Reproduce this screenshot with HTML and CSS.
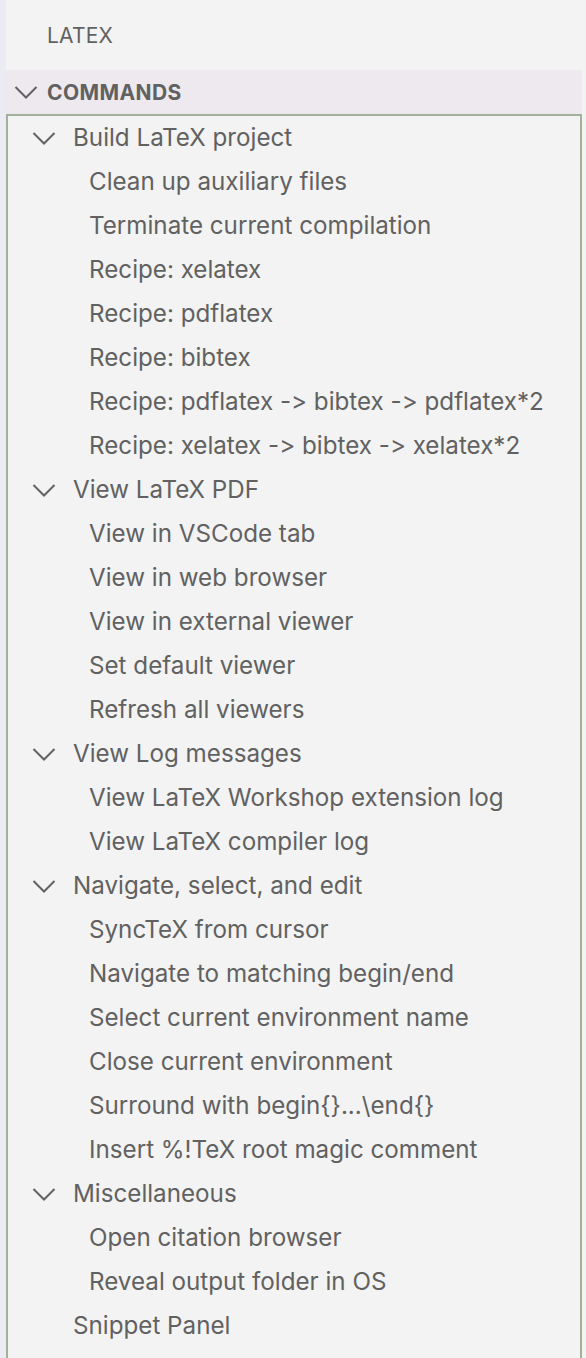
FILE: index.html
```html
<!DOCTYPE html>
<html>
<head>
<meta charset="utf-8">
<link rel="stylesheet" href="styles.css">
</head>
<body>
<div class="app">
  <div class="strip"></div>
  <div class="panel">
    <div class="title">LATEX</div>
    <div class="section-head">
      <svg class="chev" viewBox="0 0 32 32"><path d="M5.5 11 L16 21.5 L26.5 11"/></svg>
      <span>COMMANDS</span>
    </div>
    <div class="tree">
      <div class="row l1"><svg class="chev" viewBox="0 0 32 32"><path d="M5.5 11 L16 21.5 L26.5 11"/></svg><span>Build LaTeX project</span></div>
      <div class="row l2">Clean up auxiliary files</div>
      <div class="row l2">Terminate current compilation</div>
      <div class="row l2">Recipe: xelatex</div>
      <div class="row l2">Recipe: pdflatex</div>
      <div class="row l2">Recipe: bibtex</div>
      <div class="row l2">Recipe: pdflatex -&gt; bibtex -&gt; pdflatex*2</div>
      <div class="row l2">Recipe: xelatex -&gt; bibtex -&gt; xelatex*2</div>
      <div class="row l1"><svg class="chev" viewBox="0 0 32 32"><path d="M5.5 11 L16 21.5 L26.5 11"/></svg><span>View LaTeX PDF</span></div>
      <div class="row l2">View in VSCode tab</div>
      <div class="row l2">View in web browser</div>
      <div class="row l2">View in external viewer</div>
      <div class="row l2">Set default viewer</div>
      <div class="row l2">Refresh all viewers</div>
      <div class="row l1"><svg class="chev" viewBox="0 0 32 32"><path d="M5.5 11 L16 21.5 L26.5 11"/></svg><span>View Log messages</span></div>
      <div class="row l2">View LaTeX Workshop extension log</div>
      <div class="row l2">View LaTeX compiler log</div>
      <div class="row l1"><svg class="chev" viewBox="0 0 32 32"><path d="M5.5 11 L16 21.5 L26.5 11"/></svg><span>Navigate, select, and edit</span></div>
      <div class="row l2">SyncTeX from cursor</div>
      <div class="row l2">Navigate to matching begin/end</div>
      <div class="row l2">Select current environment name</div>
      <div class="row l2">Close current environment</div>
      <div class="row l2">Surround with begin{}...\end{}</div>
      <div class="row l2">Insert %!TeX root magic comment</div>
      <div class="row l1"><svg class="chev" viewBox="0 0 32 32"><path d="M5.5 11 L16 21.5 L26.5 11"/></svg><span>Miscellaneous</span></div>
      <div class="row l2">Open citation browser</div>
      <div class="row l2">Reveal output folder in OS</div>
      <div class="row l1 leaf"><span>Snippet Panel</span></div>
    </div>
  </div>
</div>
</body>
</html>
```

FILE: styles.css
```css
html, body {
  margin: 0;
  padding: 0;
  background: #f3f3f3;
  height: 1358px;
  overflow: hidden;
}

.app {
  display: flex;
  height: 1358px;
  font-family: Inter, "Noto Sans", sans-serif;
  font-variant-ligatures: none;
  font-feature-settings: "calt" 0, "liga" 0;
  color: #616161;
}

.strip {
  width: 6px;
  background: #ebebf3;
  flex: none;
}

.panel {
  width: 576px;
  flex: none;
  display: flex;
  flex-direction: column;
}

.title {
  height: 70px;
  display: flex;
  align-items: center;
  padding-left: 41px;
  font-size: 21px;
  letter-spacing: 0.2px;
  box-sizing: border-box;
}

.section-head {
  height: 44px;
  background: #ede9ee;
  display: flex;
  align-items: center;
  padding-left: 4px;
  font-size: 21px;
  font-weight: 700;
  letter-spacing: 0.4px;
}

.section-head .chev {
  margin-right: 5px;
}

.chev {
  width: 32px;
  height: 32px;
  flex: none;
  fill: none;
  stroke: #616161;
  stroke-width: 2;
}

.tree {
  flex: 1;
  border: 2px solid #a2b298;
  border-bottom: none;
  display: flex;
  flex-direction: column;
}

.row {
  height: 44px;
  box-sizing: border-box;
  padding-bottom: 2px;
  display: flex;
  align-items: center;
  font-size: 24.2px;
  white-space: nowrap;
}

.row .chev {
  margin-top: 2px;
}

.row.l1 {
  padding-left: 20px;
}

.row.l1 .chev {
  margin-right: 13px;
}

.row.leaf {
  padding-left: 65px;
}

.row.l2 {
  padding-left: 81px;
}
```
